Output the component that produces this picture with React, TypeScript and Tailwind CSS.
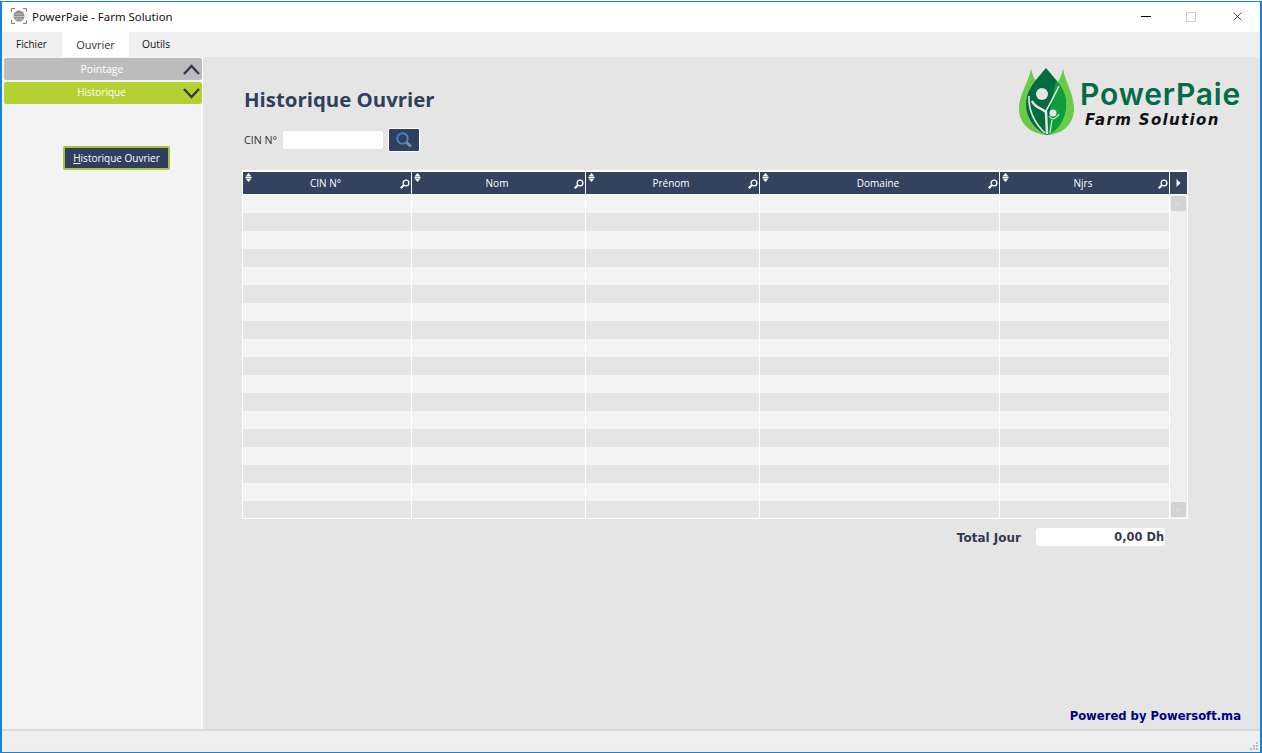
import { X } from "lucide-react";

const COLUMNS = [
  { label: "CIN N°", width: "w-[168px]" },
  { label: "Nom", width: "w-[173px]" },
  { label: "Prénom", width: "w-[173px]" },
  { label: "Domaine", width: "w-[239px]" },
  { label: "Njrs", width: "w-[169px]" },
];

const ROWS = Array.from({ length: 18 }, (_, i) => i);

function SortIcon() {
  return (
    <svg className="absolute left-[2px] top-[1px]" width="7" height="9" viewBox="0 0 7 9" fill="#fff">
      <path d="M3.5 0 L6.5 3.5 H0.5 Z" />
      <rect x="0.5" y="4" width="6" height="1" />
      <path d="M0.5 5.5 H6.5 L3.5 9 Z" />
    </svg>
  );
}

function LensIcon() {
  return (
    <svg className="absolute right-[1px] top-[7px]" width="10" height="10" viewBox="0 0 10 10" fill="none" stroke="#fff">
      <circle cx="6" cy="4" r="2.9" strokeWidth="1.3" />
      <path d="M3.8 6.2 L0.8 9.2" strokeWidth="2" />
    </svg>
  );
}

function Chevron({ up }: { up?: boolean }) {
  return (
    <svg className="absolute right-[2px] top-[6px]" width="17" height="11" viewBox="0 0 17 11" fill="none" stroke="#2c3a4c" strokeWidth="2.4">
      <path d={up ? "M1 10 L8.5 2 L16 10" : "M1 1 L8.5 9 L16 1"} />
    </svg>
  );
}

function Logo() {
  return (
    <div className="flex items-start h-[68px]">
      <svg width="56" height="68" viewBox="0 0 56 68" className="mr-[5px] -ml-px">
        <path d="M12 1 C14 12 24 22 24 36 L28 67 C10 66 0 54 0 41 C0 26 9 16 12 1 Z" fill="#6acb4b" />
        <path d="M44 1 C42 12 32 22 32 36 L28 67 C46 66 55 54 55 41 C55 26 47 16 44 1 Z" fill="#6acb4b" />
        <path d="M27 0 L38 13 C43 20 47 27 47 36 C47 52 38 63 28 67 C18 63 7 52 7 36 C7 27 11 20 16 13 Z" fill="#036b3f" />
        <path d="M37 12 C44 20 47 27 47 36 C47 52 38 63 29 67 L31 40 Z" fill="#0c9e3c" />
        <path d="M13 33 C16 40 23 40 27 44 L28 66" fill="none" stroke="#e5e5e5" strokeWidth="2.5" />
        <path d="M27 43 C31 36 35 28 40 18" fill="none" stroke="#e5e5e5" strokeWidth="1.6" />
        <path d="M10 28 C9 42 16 56 26 65" fill="none" stroke="#e5e5e5" strokeWidth="1.6" />
        <circle cx="23" cy="26" r="6" fill="#e5e5e5" />
        <circle cx="34" cy="45" r="3.5" fill="#e5e5e5" />
        <path d="M30 48 C33 52 36 52 40 46 M33 52 L31 65" fill="none" stroke="#e5e5e5" strokeWidth="1.2" />
      </svg>
      <div className="flex flex-col">
        <span className="mt-[10px] text-[30px] leading-[32px] tracking-[0.8px] font-semibold text-[#036b47] font-['Inter',sans-serif]">
          PowerPaie
        </span>
        <span className="ml-[5px] mt-px text-[15px] leading-[18px] tracking-[1.35px] font-bold italic text-[#111] font-['DejaVu_Sans',sans-serif]">
          Farm Solution
        </span>
      </div>
    </div>
  );
}

export default function App() {
  return (
    <div className="w-[1262px] h-[753px] bg-white pt-px overflow-hidden">
      <div className="h-[752px] flex flex-col bg-white border-x-2 border-y border-[#1883d7] text-[10.5px] text-[#222] font-['Open_Sans',sans-serif]">
        {/* Title bar */}
        <div className="h-[30px] shrink-0 flex items-center bg-white">
          <svg className="ml-[9px] mr-[5px] mb-[2px]" width="16" height="16" viewBox="0 0 16 16" fill="none">
            <path d="M0.5 4 V0.5 H4 M12 0.5 H15.5 V4 M15.5 12 V15.5 H12 M4 15.5 H0.5 V12" stroke="#777" />
            <circle cx="8" cy="8" r="5.5" fill="#8b8b8b" />
            <path d="M4 6 H12 M2.5 8.5 H13.5 M4.5 11 H11.5" stroke="#c4c4c4" />
          </svg>
          <span className="text-[11.4px] text-[#111] font-['Noto_Sans',sans-serif] mb-px">PowerPaie - Farm Solution</span>
          <div className="ml-auto flex items-center mb-px">
            <div className="w-[10px] h-px bg-black mr-[35px]" />
            <div className="w-[10px] h-[10px] border border-[#ccc] mr-[34px]" />
            <X className="w-[15px] h-[15px] text-black mr-[15px]" strokeWidth={1.1} />
          </div>
        </div>

        {/* Menu bar */}
        <div className="h-[25px] shrink-0 flex bg-[#efefef] text-[#111]">
          <div className="w-[60px] pl-[14px] text-[10px] leading-[24px]">Fichier</div>
          <div className="w-[67px] bg-white text-center text-[11px] leading-[25px] text-[#333]">Ouvrier</div>
          <div className="pl-[13px] text-[10.3px] leading-[24px]">Outils</div>
        </div>

        <div className="flex-1 flex min-h-0">
          {/* Sidebar */}
          <div className="w-[201px] shrink-0 bg-[#f3f3f3] border-r-2 border-white pt-px pl-[2px]">
            <div className="relative h-[22px] w-[198px] pr-[2px] rounded-[2px] bg-[#bcbcbc] text-center text-white leading-[22px]">
              Pointage
              <Chevron up />
            </div>
            <div className="relative mt-[2px] h-[22px] w-[198px] pr-[3px] rounded-[2px] bg-[#b5d032] text-center text-white text-[10px] leading-[20px]">
              Historique
              <Chevron />
            </div>
            <button className="block ml-[59px] mt-[42px] w-[107px] h-[24px] rounded-[2px] border-2 border-[#a8c23a] bg-[#2f3f5e] text-white text-[10px] leading-[20px]">
              <span className="underline">H</span>istorique Ouvrier
            </button>
          </div>

          {/* Main content */}
          <div className="flex-1 min-w-0 flex flex-col bg-[#e5e5e5] pl-[41px]">
            <div className="flex justify-between pt-[10px] h-[113px] shrink-0">
              <div>
                <h1 className="mt-[18px] text-[20.4px] leading-[28px] font-bold text-[#2f3f5e]">
                  Historique Ouvrier
                </h1>
                <div className="mt-[15px] flex items-center">
                  <span className="w-[39px] pt-px text-[10.7px] text-[#333]">CIN N°</span>
                  <input className="w-[100px] h-[18px] rounded-[3px] bg-white" />
                  <button className="ml-[5px] w-[32px] h-[24px] flex items-center justify-center rounded-[2px] border border-white bg-[#2f3f5e]">
                    <svg width="18" height="18" viewBox="0 0 18 18" fill="none">
                      <circle cx="7.5" cy="7.5" r="5.2" stroke="#3f83c4" strokeWidth="2" />
                      <path d="M11.5 11.5 L16 15.5" stroke="#8a8f96" strokeWidth="2.6" />
                    </svg>
                  </button>
                </div>
              </div>
              <div className="mr-[19px] pt-px">
                <Logo />
              </div>
            </div>

            {/* Table */}
            <div className="w-[946px] h-[349px] shrink-0 flex flex-col bg-white border border-white -ml-[2px] overflow-hidden">
              <div className="flex gap-px h-[24px] pt-px shrink-0">
                {COLUMNS.map((col) => (
                  <div
                    key={col.label}
                    className={`relative ${col.width} h-[22px] pr-[3px] bg-[#32425f] text-center text-white text-[10px] leading-[22px]`}
                  >
                    <SortIcon />
                    {col.label}
                    <LensIcon />
                  </div>
                ))}
                <div className="relative w-[17px] h-[22px] bg-[#32425f]">
                  <svg className="absolute left-[6px] top-[7px]" width="5" height="8" viewBox="0 0 5 8" fill="#fff">
                    <path d="M0.5 0 L4.5 4 L0.5 8 Z" />
                  </svg>
                </div>
              </div>
              <div className="flex-1 flex min-h-0 overflow-hidden">
                <div className="w-[926px] flex flex-col">
                  {ROWS.map((i) => (
                    <div key={i} className={`flex h-[18px] shrink-0 gap-px ${i % 2 === 0 ? "bg-[#f3f3f3]" : "bg-[#e5e5e5]"}`}>
                      {COLUMNS.map((col, c) => (
                        <div key={c} className={`${col.width} ${c < 4 ? "shadow-[1px_0_0_#fff]" : ""}`} />
                      ))}
                    </div>
                  ))}
                </div>
                <div className="w-[18px] ml-px flex flex-col justify-between bg-[#efefef] p-px">
                  <div className="h-[15px] rounded-[2px] bg-[#d2d2d2] flex items-center justify-center">
                    <svg width="7" height="4" viewBox="0 0 7 4" fill="none" stroke="#e4e4e4">
                      <path d="M0.5 3.5 L3.5 0.5 L6.5 3.5" />
                    </svg>
                  </div>
                  <div className="h-[15px] rounded-[2px] bg-[#d2d2d2] flex items-center justify-center">
                    <svg width="7" height="4" viewBox="0 0 7 4" fill="none" stroke="#e4e4e4">
                      <path d="M0.5 0.5 L3.5 3.5 L6.5 0.5" />
                    </svg>
                  </div>
                </div>
              </div>
            </div>

            {/* Total */}
            <div className="w-[923px] mt-[8px] flex items-center justify-end -ml-[2px] font-['DejaVu_Sans',sans-serif] font-bold text-[12px] text-[#333b4d]">
              <span className="mr-[15px] pt-[2px]">Total Jour</span>
              <div className="w-[129px] h-[18px] rounded-[3px] bg-white text-right pr-px text-[11.4px] leading-[18px]">0,00 Dh</div>
            </div>

            <div className="mt-auto mb-[5px] mr-[19px] text-right font-['DejaVu_Sans',sans-serif] font-bold text-[11.6px] leading-[16px] text-[#00007f]">
              Powered by Powersoft.ma
            </div>
          </div>
        </div>

        {/* Status bar */}
        <div className="relative h-[23px] shrink-0 bg-[#efefef] border-t-2 border-[#d8d8d8]">
          <svg className="absolute right-[1px] bottom-[1px]" width="9" height="9" viewBox="0 0 9 9" fill="#bbb">
            <rect x="6" y="0" width="2" height="2" />
            <rect x="3" y="3" width="2" height="2" />
            <rect x="6" y="3" width="2" height="2" />
            <rect x="0" y="6" width="2" height="2" />
            <rect x="3" y="6" width="2" height="2" />
            <rect x="6" y="6" width="2" height="2" />
          </svg>
        </div>
      </div>
    </div>
  );
}
